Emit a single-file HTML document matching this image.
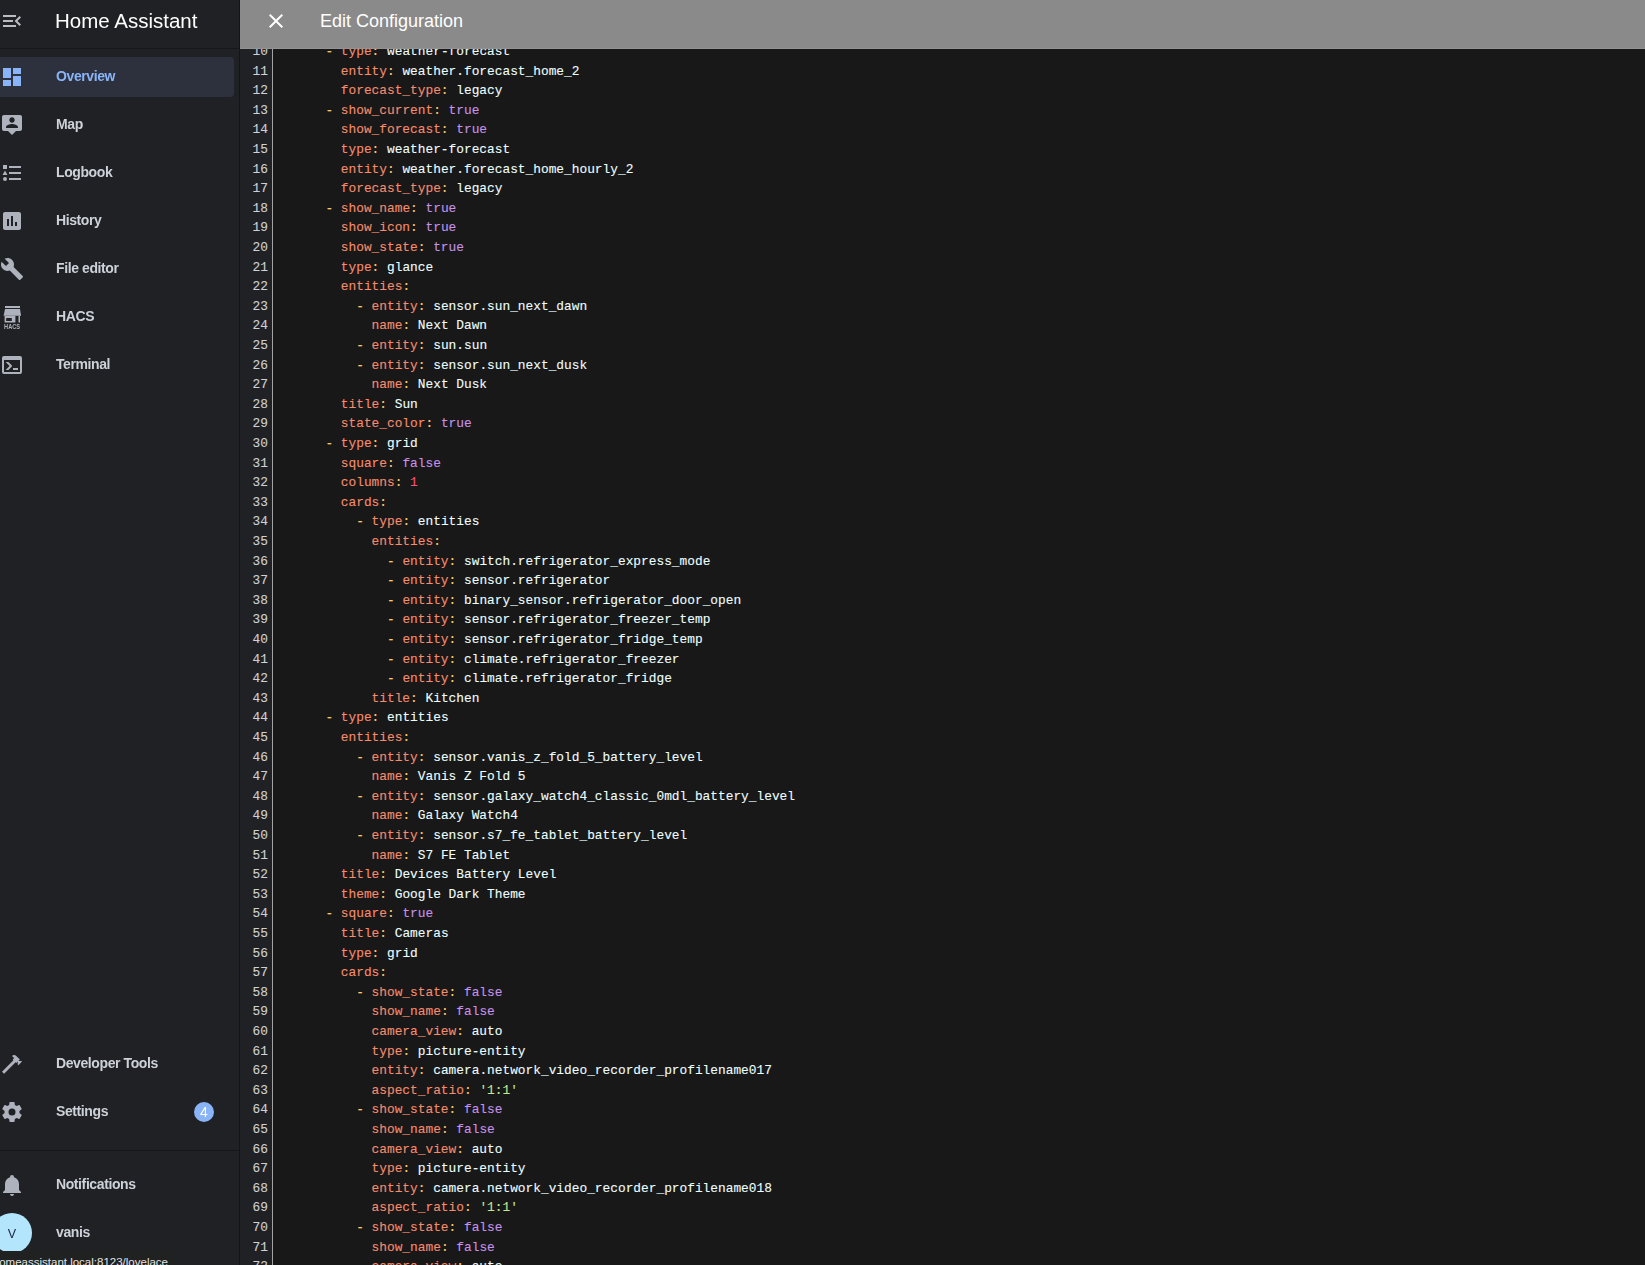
<!DOCTYPE html>
<html><head><meta charset="utf-8">
<style>
*{margin:0;padding:0;box-sizing:border-box}
html,body{width:1645px;height:1265px;overflow:hidden;background:#181818;font-family:"Liberation Sans",sans-serif}
#sb{position:absolute;left:0;top:0;width:240px;height:1265px;background:#202124;border-right:1px solid #131416;will-change:transform}
#sbh{position:absolute;left:0;top:0;width:239px;height:49px;border-bottom:1px solid #161719}
.ic{position:absolute;width:24px;height:24px}
.ic svg{display:block;width:24px;height:24px}
.lbl{position:absolute;left:56px;font-size:14px;font-weight:bold;letter-spacing:-0.4px;color:#cdd1d9;white-space:nowrap;line-height:16px}
#sel{position:absolute;left:-4px;top:57px;width:238px;height:40px;border-radius:4px;background:#2c313d}
#hdr{position:absolute;left:240px;top:0;width:1405px;height:49px;background:#8a8a8a;z-index:5;border-bottom:1px solid #939393}
#code{position:absolute;left:240px;top:49px;width:1405px;height:1216px;overflow:hidden}
#gut{position:absolute;left:0;top:0;width:33px;height:1216px;background:#202124;border-right:1px solid #a3a3a3}
.ln{position:absolute;left:0;height:19.6px;line-height:19.6px;font-family:"Liberation Mono",monospace;font-size:12.83px;white-space:pre;-webkit-text-stroke:0.1px currentColor}
.num{position:absolute;right:-28px;width:60px;text-align:right;color:#cfd1d4}
.ln .num{left:-32px;right:auto}
.tx{position:absolute;left:39.2px;color:#eeffff}
i{font-style:normal}
.k{color:#f78c6c}.p{color:#ffcb6b}.v{color:#eeffff}.b{color:#c792ea}.n{color:#ff5370}.s{color:#c3e88d}
#tip{position:absolute;left:0;top:1250.5px;width:175px;height:15px;background:#202121;border-top-right-radius:4px;z-index:6;overflow:hidden}
#tip span{position:absolute;right:7px;top:4px;font-size:11.5px;color:#e3e3e3;white-space:nowrap;line-height:14px}
</style></head><body>
<div id="sb">
 <div id="sbh">
  <div class="ic" style="left:0;top:9px"><svg viewBox="0 0 24 24"><path fill="#b9bcc2" d="M21,15.61L19.59,17L14.58,12L19.59,7L21,8.39L17.44,12L21,15.61M3,6H16V8H3V6M3,13V11H13V13H3M3,18V16H16V18H3Z"/></svg></div>
  <div style="position:absolute;left:55px;top:8.5px;font-size:20.5px;color:#ffffff;line-height:24px;white-space:nowrap">Home Assistant</div>
 </div>
 <div id="sel"></div>
 <div class="ic" style="left:0;top:65px"><svg viewBox="0 0 24 24"><path fill="#8ab4f8" d="M13,3V9H21V3M13,21H21V11H13M3,21H11V15H3M3,13H11V3H3V13Z"/></svg></div>
 <div class="lbl" style="top:68px;color:#8ab4f8">Overview</div>
 <div class="ic" style="left:0;top:113px"><svg viewBox="0 0 24 24"><path fill="#adb2bd" d="M20 2H4C2.9 2 2 2.9 2 4V16C2 17.1 2.9 18 4 18H8L12 22L16 18H20C21.1 18 22 17.1 22 16V4C22 2.9 21.1 2 20 2M12 4.3C13.5 4.3 14.7 5.5 14.7 7S13.5 9.7 12 9.7 9.3 8.5 9.3 7 10.5 4.3 12 4.3M18 15H6V14.1C6 12.1 10 11 12 11S18 12.1 18 14.1V15Z"/></svg></div>
 <div class="lbl" style="top:116px">Map</div>
 <div class="ic" style="left:0;top:161px"><svg viewBox="0 0 24 24"><path fill="#adb2bd" d="M5,9.5L7.5,14H2.5L5,9.5M3,4H7V8H3V4M5,20A2,2 0 0,0 7,18A2,2 0 0,0 5,16A2,2 0 0,0 3,18A2,2 0 0,0 5,20M9,5V7H21V5H9M9,19H21V17H9V19M9,13H21V11H9V13Z"/></svg></div>
 <div class="lbl" style="top:164px">Logbook</div>
 <div class="ic" style="left:0;top:209px"><svg viewBox="0 0 24 24"><path fill="#adb2bd" d="M9 17H7V10H9V17M13 17H11V7H13V17M17 17H15V13H17V17M19 3H5C3.9 3 3 3.9 3 5V19C3 20.1 3.9 21 5 21H19C20.1 21 21 20.1 21 19V5C21 3.9 20.1 3 19 3Z"/></svg></div>
 <div class="lbl" style="top:212px">History</div>
 <div class="ic" style="left:0;top:257px"><svg viewBox="0 0 24 24"><path fill="#adb2bd" d="M22.7,19L13.6,9.9C14.5,7.6 14,4.9 12.1,3C10.1,1 7.1,0.6 4.7,1.7L9,6L6,9L1.6,4.7C0.4,7.1 0.9,10.1 2.9,12.1C4.8,14 7.5,14.5 9.8,13.6L18.9,22.7C19.3,23.1 19.9,23.1 20.3,22.7L22.6,20.4C23.1,20 23.1,19.3 22.7,19Z"/></svg></div>
 <div class="lbl" style="top:260px">File editor</div>
 <div class="ic" style="left:0;top:305px"><svg viewBox="0 0 24 24"><g fill="#adb2bd"><path d="M5,1H20V3H5Z"/><path d="M5,4H20L21.1,10.8H3.6Z"/><path fill-rule="evenodd" d="M4.6,10.8H15.4V17.5H4.6Z M6.2,12.9V16H11.8V12.9Z"/><path d="M18.5,10.8H20V17.5H18.5Z"/></g><text x="12.05" y="23.7" font-size="6.3" font-family="Liberation Sans" font-weight="bold" text-anchor="middle" textLength="15.9" lengthAdjust="spacingAndGlyphs" fill="#adb2bd">HACS</text></svg></div>
 <div class="lbl" style="top:308px">HACS</div>
 <div class="ic" style="left:0;top:353px"><svg viewBox="0 0 24 24"><path fill="#adb2bd" d="M20,19V7H4V19H20M20,3A2,2 0 0,1 22,5V19A2,2 0 0,1 20,21H4A2,2 0 0,1 2,19V5C2,3.89 2.9,3 4,3H20M13,17V15H18V17H13M9.58,13L5.57,9H8.4L11.7,12.3C12.09,12.69 12.09,13.33 11.7,13.72L8.42,17H5.59L9.58,13Z"/></svg></div>
 <div class="lbl" style="top:356px">Terminal</div>

 <div class="ic" style="left:0;top:1052px"><svg viewBox="0 0 24 24"><path fill="#adb2bd" d="M2 19.63L13.43 8.2L12.72 7.5L14.14 6.07L12 3.89C13.2 2.7 15.09 2.7 16.27 3.89L19.87 7.5L18.45 8.91H21.29L22 9.62L18.45 13.21L17.74 12.5V9.62L16.27 11.04L15.56 10.33L4.13 21.76L2 19.63Z"/></svg></div>
 <div class="lbl" style="top:1055px">Developer Tools</div>
 <div class="ic" style="left:0;top:1100px"><svg viewBox="0 0 24 24"><path fill="#adb2bd" d="M12,15.5A3.5,3.5 0 0,1 8.5,12A3.5,3.5 0 0,1 12,8.5A3.5,3.5 0 0,1 15.5,12A3.5,3.5 0 0,1 12,15.5M19.43,12.97C19.47,12.65 19.5,12.33 19.5,12C19.5,11.67 19.47,11.34 19.43,11L21.54,9.37C21.73,9.22 21.78,8.95 21.66,8.73L19.66,5.27C19.54,5.05 19.27,4.96 19.050,5.05L16.56,6.05C16.04,5.66 15.5,5.32 14.87,5.07L14.5,2.42C14.46,2.18 14.25,2 14,2H10C9.75,2 9.54,2.180 9.5,2.42L9.13,5.07C8.5,5.32 7.96,5.66 7.44,6.05L4.95,5.05C4.73,4.96 4.46,5.05 4.34,5.27L2.34,8.73C2.21,8.95 2.27,9.22 2.46,9.37L4.57,11C4.53,11.34 4.5,11.67 4.5,12C4.5,12.33 4.53,12.65 4.57,12.97L2.46,14.63C2.27,14.78 2.21,15.05 2.34,15.27L4.34,18.73C4.46,18.95 4.73,19.03 4.95,18.95L7.44,17.94C7.96,18.34 8.5,18.68 9.13,18.93L9.5,21.58C9.54,21.82 9.75,22 10,22H14C14.25,22 14.46,21.82 14.5,21.58L14.87,18.93C15.5,18.67 16.04,18.34 16.56,17.94L19.05,18.95C19.27,19.03 19.54,18.95 19.66,18.73L21.66,15.27C21.78,15.05 21.73,14.78 21.54,14.63L19.43,12.97Z"/></svg></div>
 <div class="lbl" style="top:1103px">Settings</div>
 <div style="position:absolute;left:194px;top:1102px;width:20px;height:20px;border-radius:50%;background:#8ab4f8;color:#fff;font-size:14px;line-height:20px;text-align:center">4</div>
 <div style="position:absolute;left:0;top:1150px;width:239px;height:1px;background:#161719"></div>
 <div class="ic" style="left:0;top:1173px"><svg viewBox="0 0 24 24"><path fill="#adb2bd" d="M21,19V20H3V19L5,17V11C5,7.9 7.03,5.17 10,4.29C10,4.19 10,4.1 10,4A2,2 0 0,1 12,2A2,2 0 0,1 14,4C14,4.1 14,4.19 14,4.29C16.97,5.17 19,7.9 19,11V17L21,19M14,21A2,2 0 0,1 12,23A2,2 0 0,1 10,21"/></svg></div>
 <div class="lbl" style="top:1176px">Notifications</div>
 <div style="position:absolute;left:-8px;top:1213px;width:40px;height:40px;border-radius:50%;background:#b3e5fc;color:#1a2540;font-size:12.5px;line-height:42px;text-align:center">V</div>
 <div class="lbl" style="top:1224px">vanis</div>
</div>
<div id="hdr">
 <div class="ic" style="left:24px;top:9px"><svg viewBox="0 0 24 24"><path fill="#ffffff" d="M19,6.41L17.59,5L12,10.59L6.41,5L5,6.41L10.59,12L5,17.59L6.41,19L12,13.41L17.59,19L19,17.59L13.41,12L19,6.41Z"/></svg></div>
 <div style="position:absolute;left:80px;top:10px;font-size:18px;color:#fff;line-height:22px;white-space:nowrap">Edit Configuration</div>
</div>
<div id="code">
 <div id="gut"></div>
 <div id="lines" style="position:absolute;left:0;top:-7px;width:1405px">
<div class="ln" style="top:0.0px"><span class="num">10</span><span class="tx">      <i class="p">-</i> <i class="k">type</i><i class="p">:</i> <i class="v">weather-forecast</i></span></div>
<div class="ln" style="top:19.6px"><span class="num">11</span><span class="tx">        <i class="k">entity</i><i class="p">:</i> <i class="v">weather.forecast_home_2</i></span></div>
<div class="ln" style="top:39.2px"><span class="num">12</span><span class="tx">        <i class="k">forecast_type</i><i class="p">:</i> <i class="v">legacy</i></span></div>
<div class="ln" style="top:58.8px"><span class="num">13</span><span class="tx">      <i class="p">-</i> <i class="k">show_current</i><i class="p">:</i> <i class="b">true</i></span></div>
<div class="ln" style="top:78.4px"><span class="num">14</span><span class="tx">        <i class="k">show_forecast</i><i class="p">:</i> <i class="b">true</i></span></div>
<div class="ln" style="top:98.0px"><span class="num">15</span><span class="tx">        <i class="k">type</i><i class="p">:</i> <i class="v">weather-forecast</i></span></div>
<div class="ln" style="top:117.6px"><span class="num">16</span><span class="tx">        <i class="k">entity</i><i class="p">:</i> <i class="v">weather.forecast_home_hourly_2</i></span></div>
<div class="ln" style="top:137.2px"><span class="num">17</span><span class="tx">        <i class="k">forecast_type</i><i class="p">:</i> <i class="v">legacy</i></span></div>
<div class="ln" style="top:156.8px"><span class="num">18</span><span class="tx">      <i class="p">-</i> <i class="k">show_name</i><i class="p">:</i> <i class="b">true</i></span></div>
<div class="ln" style="top:176.4px"><span class="num">19</span><span class="tx">        <i class="k">show_icon</i><i class="p">:</i> <i class="b">true</i></span></div>
<div class="ln" style="top:196.0px"><span class="num">20</span><span class="tx">        <i class="k">show_state</i><i class="p">:</i> <i class="b">true</i></span></div>
<div class="ln" style="top:215.6px"><span class="num">21</span><span class="tx">        <i class="k">type</i><i class="p">:</i> <i class="v">glance</i></span></div>
<div class="ln" style="top:235.2px"><span class="num">22</span><span class="tx">        <i class="k">entities</i><i class="p">:</i></span></div>
<div class="ln" style="top:254.8px"><span class="num">23</span><span class="tx">          <i class="p">-</i> <i class="k">entity</i><i class="p">:</i> <i class="v">sensor.sun_next_dawn</i></span></div>
<div class="ln" style="top:274.4px"><span class="num">24</span><span class="tx">            <i class="k">name</i><i class="p">:</i> <i class="v">Next Dawn</i></span></div>
<div class="ln" style="top:294.0px"><span class="num">25</span><span class="tx">          <i class="p">-</i> <i class="k">entity</i><i class="p">:</i> <i class="v">sun.sun</i></span></div>
<div class="ln" style="top:313.6px"><span class="num">26</span><span class="tx">          <i class="p">-</i> <i class="k">entity</i><i class="p">:</i> <i class="v">sensor.sun_next_dusk</i></span></div>
<div class="ln" style="top:333.2px"><span class="num">27</span><span class="tx">            <i class="k">name</i><i class="p">:</i> <i class="v">Next Dusk</i></span></div>
<div class="ln" style="top:352.8px"><span class="num">28</span><span class="tx">        <i class="k">title</i><i class="p">:</i> <i class="v">Sun</i></span></div>
<div class="ln" style="top:372.4px"><span class="num">29</span><span class="tx">        <i class="k">state_color</i><i class="p">:</i> <i class="b">true</i></span></div>
<div class="ln" style="top:392.0px"><span class="num">30</span><span class="tx">      <i class="p">-</i> <i class="k">type</i><i class="p">:</i> <i class="v">grid</i></span></div>
<div class="ln" style="top:411.6px"><span class="num">31</span><span class="tx">        <i class="k">square</i><i class="p">:</i> <i class="b">false</i></span></div>
<div class="ln" style="top:431.2px"><span class="num">32</span><span class="tx">        <i class="k">columns</i><i class="p">:</i> <i class="n">1</i></span></div>
<div class="ln" style="top:450.8px"><span class="num">33</span><span class="tx">        <i class="k">cards</i><i class="p">:</i></span></div>
<div class="ln" style="top:470.4px"><span class="num">34</span><span class="tx">          <i class="p">-</i> <i class="k">type</i><i class="p">:</i> <i class="v">entities</i></span></div>
<div class="ln" style="top:490.0px"><span class="num">35</span><span class="tx">            <i class="k">entities</i><i class="p">:</i></span></div>
<div class="ln" style="top:509.6px"><span class="num">36</span><span class="tx">              <i class="p">-</i> <i class="k">entity</i><i class="p">:</i> <i class="v">switch.refrigerator_express_mode</i></span></div>
<div class="ln" style="top:529.2px"><span class="num">37</span><span class="tx">              <i class="p">-</i> <i class="k">entity</i><i class="p">:</i> <i class="v">sensor.refrigerator</i></span></div>
<div class="ln" style="top:548.8px"><span class="num">38</span><span class="tx">              <i class="p">-</i> <i class="k">entity</i><i class="p">:</i> <i class="v">binary_sensor.refrigerator_door_open</i></span></div>
<div class="ln" style="top:568.4px"><span class="num">39</span><span class="tx">              <i class="p">-</i> <i class="k">entity</i><i class="p">:</i> <i class="v">sensor.refrigerator_freezer_temp</i></span></div>
<div class="ln" style="top:588.0px"><span class="num">40</span><span class="tx">              <i class="p">-</i> <i class="k">entity</i><i class="p">:</i> <i class="v">sensor.refrigerator_fridge_temp</i></span></div>
<div class="ln" style="top:607.6px"><span class="num">41</span><span class="tx">              <i class="p">-</i> <i class="k">entity</i><i class="p">:</i> <i class="v">climate.refrigerator_freezer</i></span></div>
<div class="ln" style="top:627.2px"><span class="num">42</span><span class="tx">              <i class="p">-</i> <i class="k">entity</i><i class="p">:</i> <i class="v">climate.refrigerator_fridge</i></span></div>
<div class="ln" style="top:646.8px"><span class="num">43</span><span class="tx">            <i class="k">title</i><i class="p">:</i> <i class="v">Kitchen</i></span></div>
<div class="ln" style="top:666.4px"><span class="num">44</span><span class="tx">      <i class="p">-</i> <i class="k">type</i><i class="p">:</i> <i class="v">entities</i></span></div>
<div class="ln" style="top:686.0px"><span class="num">45</span><span class="tx">        <i class="k">entities</i><i class="p">:</i></span></div>
<div class="ln" style="top:705.6px"><span class="num">46</span><span class="tx">          <i class="p">-</i> <i class="k">entity</i><i class="p">:</i> <i class="v">sensor.vanis_z_fold_5_battery_level</i></span></div>
<div class="ln" style="top:725.2px"><span class="num">47</span><span class="tx">            <i class="k">name</i><i class="p">:</i> <i class="v">Vanis Z Fold 5</i></span></div>
<div class="ln" style="top:744.8px"><span class="num">48</span><span class="tx">          <i class="p">-</i> <i class="k">entity</i><i class="p">:</i> <i class="v">sensor.galaxy_watch4_classic_0mdl_battery_level</i></span></div>
<div class="ln" style="top:764.4px"><span class="num">49</span><span class="tx">            <i class="k">name</i><i class="p">:</i> <i class="v">Galaxy Watch4</i></span></div>
<div class="ln" style="top:784.0px"><span class="num">50</span><span class="tx">          <i class="p">-</i> <i class="k">entity</i><i class="p">:</i> <i class="v">sensor.s7_fe_tablet_battery_level</i></span></div>
<div class="ln" style="top:803.6px"><span class="num">51</span><span class="tx">            <i class="k">name</i><i class="p">:</i> <i class="v">S7 FE Tablet</i></span></div>
<div class="ln" style="top:823.2px"><span class="num">52</span><span class="tx">        <i class="k">title</i><i class="p">:</i> <i class="v">Devices Battery Level</i></span></div>
<div class="ln" style="top:842.8px"><span class="num">53</span><span class="tx">        <i class="k">theme</i><i class="p">:</i> <i class="v">Google Dark Theme</i></span></div>
<div class="ln" style="top:862.4px"><span class="num">54</span><span class="tx">      <i class="p">-</i> <i class="k">square</i><i class="p">:</i> <i class="b">true</i></span></div>
<div class="ln" style="top:882.0px"><span class="num">55</span><span class="tx">        <i class="k">title</i><i class="p">:</i> <i class="v">Cameras</i></span></div>
<div class="ln" style="top:901.6px"><span class="num">56</span><span class="tx">        <i class="k">type</i><i class="p">:</i> <i class="v">grid</i></span></div>
<div class="ln" style="top:921.2px"><span class="num">57</span><span class="tx">        <i class="k">cards</i><i class="p">:</i></span></div>
<div class="ln" style="top:940.8px"><span class="num">58</span><span class="tx">          <i class="p">-</i> <i class="k">show_state</i><i class="p">:</i> <i class="b">false</i></span></div>
<div class="ln" style="top:960.4px"><span class="num">59</span><span class="tx">            <i class="k">show_name</i><i class="p">:</i> <i class="b">false</i></span></div>
<div class="ln" style="top:980.0px"><span class="num">60</span><span class="tx">            <i class="k">camera_view</i><i class="p">:</i> <i class="v">auto</i></span></div>
<div class="ln" style="top:999.6px"><span class="num">61</span><span class="tx">            <i class="k">type</i><i class="p">:</i> <i class="v">picture-entity</i></span></div>
<div class="ln" style="top:1019.2px"><span class="num">62</span><span class="tx">            <i class="k">entity</i><i class="p">:</i> <i class="v">camera.network_video_recorder_profilename017</i></span></div>
<div class="ln" style="top:1038.8px"><span class="num">63</span><span class="tx">            <i class="k">aspect_ratio</i><i class="p">:</i> <i class="s">&#x27;1:1&#x27;</i></span></div>
<div class="ln" style="top:1058.4px"><span class="num">64</span><span class="tx">          <i class="p">-</i> <i class="k">show_state</i><i class="p">:</i> <i class="b">false</i></span></div>
<div class="ln" style="top:1078.0px"><span class="num">65</span><span class="tx">            <i class="k">show_name</i><i class="p">:</i> <i class="b">false</i></span></div>
<div class="ln" style="top:1097.6px"><span class="num">66</span><span class="tx">            <i class="k">camera_view</i><i class="p">:</i> <i class="v">auto</i></span></div>
<div class="ln" style="top:1117.2px"><span class="num">67</span><span class="tx">            <i class="k">type</i><i class="p">:</i> <i class="v">picture-entity</i></span></div>
<div class="ln" style="top:1136.8px"><span class="num">68</span><span class="tx">            <i class="k">entity</i><i class="p">:</i> <i class="v">camera.network_video_recorder_profilename018</i></span></div>
<div class="ln" style="top:1156.4px"><span class="num">69</span><span class="tx">            <i class="k">aspect_ratio</i><i class="p">:</i> <i class="s">&#x27;1:1&#x27;</i></span></div>
<div class="ln" style="top:1176.0px"><span class="num">70</span><span class="tx">          <i class="p">-</i> <i class="k">show_state</i><i class="p">:</i> <i class="b">false</i></span></div>
<div class="ln" style="top:1195.6px"><span class="num">71</span><span class="tx">            <i class="k">show_name</i><i class="p">:</i> <i class="b">false</i></span></div>
<div class="ln" style="top:1215.2px"><span class="num">72</span><span class="tx">            <i class="k">camera_view</i><i class="p">:</i> <i class="v">auto</i></span></div>
 </div>
</div>
<div id="tip"><span>homeassistant.local:8123/lovelace</span></div>
</body></html>
